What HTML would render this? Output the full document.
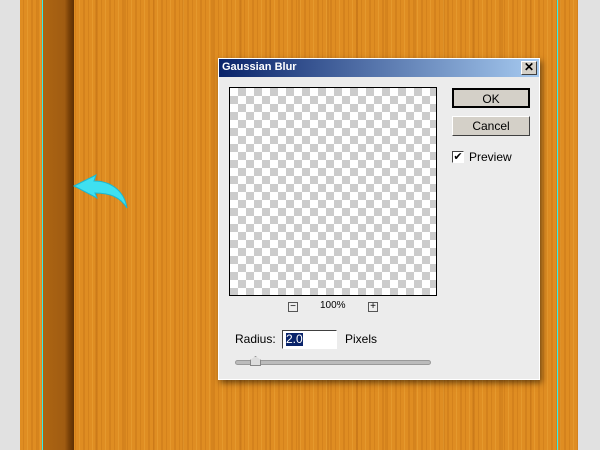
<!DOCTYPE html><html><head><style>
*{margin:0;padding:0;box-sizing:border-box}
body{width:600px;height:450px;overflow:hidden;background:#e1e1e1;position:relative;font-family:"Liberation Sans",Tahoma,sans-serif;font-size:11px}
.wood{position:absolute;left:20px;top:0;width:558px;height:450px;background:
repeating-linear-gradient(90deg,rgba(0,0,0,0) 0 3px,rgba(170,85,5,.2) 3px 4px,rgba(0,0,0,0) 4px 7px,rgba(255,200,90,.2) 7px 8px,rgba(0,0,0,0) 8px 11px,rgba(150,70,0,.15) 11px 13px),
repeating-linear-gradient(90deg,rgba(0,0,0,0) 0 17px,rgba(140,65,0,.12) 17px 19px,rgba(0,0,0,0) 19px 29px),
#df8d22}
.strip{position:absolute;left:43px;top:0;width:31px;height:450px;background:linear-gradient(90deg,#ad6512,#a05c12 70%,#7a4208 84%,#5e3003)}
.g{position:absolute;top:0;width:1px;height:450px;background:#2ff0f0}
.dlg{position:absolute;left:218px;top:58px;width:322px;height:322px;background:#ececec;box-shadow:2px 3px 6px rgba(0,0,0,.5);border:1px solid #fff}
.tb{height:18px;background:linear-gradient(90deg,#0a246a,#a6caf0);color:#fff;font-weight:bold;font-size:11px;padding:2px 3px;position:relative}
.x{position:absolute;right:2px;top:2px;width:16px;height:14px;background:#d4d0c8;border:1px solid;border-color:#fff #404040 #404040 #fff;color:#000;text-align:center;line-height:11px;font-size:12px}
.pv{position:absolute;left:10px;top:28px;width:208px;height:209px;border:1px solid #000;background:#fff;background-image:linear-gradient(45deg,#ccc 25%,transparent 25%,transparent 75%,#ccc 75%),linear-gradient(45deg,#ccc 25%,transparent 25%,transparent 75%,#ccc 75%);background-size:16px 16px;background-position:0 0,8px 8px}
.btn{position:absolute;left:233px;width:78px;height:20px;background:#d4d0c8;border:1px solid;border-color:#fff #404040 #404040 #fff;text-align:center;line-height:18px;font-size:12px}
.t{position:absolute;font-size:12px}
</style></head><body>
<div class="wood"></div><div class="strip"></div>
<div class="g" style="left:42px"></div><div class="g" style="left:557px"></div>
<svg style="position:absolute;left:72px;top:172px" width="60" height="40"><path d="M2 14 L24 3 L22 9 C38 9 52 18 55 36 C48 25 38 21 23 21 L25 26 Z" fill="#3fe0f0" stroke="#1cb8d0" stroke-width="1"/></svg>
<div class="dlg">
<div class="tb">Gaussian Blur<div class="x">✕</div></div>
<div class="pv"></div>
<div class="btn" style="top:29px;border:2px solid #000">OK</div>
<div class="btn" style="top:57px">Cancel</div>
<div style="position:absolute;left:233px;top:92px;width:12px;height:12px;border:1px solid;border-color:#404040 #fff #fff #404040;background:#fff;font-size:11px;line-height:10px;text-align:center">✔</div>
<div class="t" style="left:250px;top:91px">Preview</div>
<div style="position:absolute;left:69px;top:243px;width:10px;height:10px;border:1px solid #555;font-size:10px;line-height:7px;text-align:center">−</div>
<div class="t" style="left:101px;top:241px;font-size:10px">100%</div>
<div style="position:absolute;left:149px;top:243px;width:10px;height:10px;border:1px solid #555;font-size:10px;line-height:8px;text-align:center">+</div>
<div class="t" style="left:16px;top:273px">Radius:</div>
<div style="position:absolute;left:63px;top:271px;width:55px;height:19px;border:1px solid;border-color:#404040 #fff #fff #404040;background:#fff"><span style="background:#0a246a;color:#fff;font-size:12px;margin:2px 0 0 3px;display:inline-block;line-height:13px">2.0</span></div>
<div class="t" style="left:126px;top:273px">Pixels</div>
<div style="position:absolute;left:16px;top:301px;width:196px;height:5px;border-radius:3px;background:#bbb;border:1px solid #999"></div>
<div style="position:absolute;left:31px;top:297px;width:11px;height:10px;background:#ddd;border:1px solid #888;clip-path:polygon(50% 0,100% 40%,100% 100%,0 100%,0 40%)"></div>
</div>
</body></html>
